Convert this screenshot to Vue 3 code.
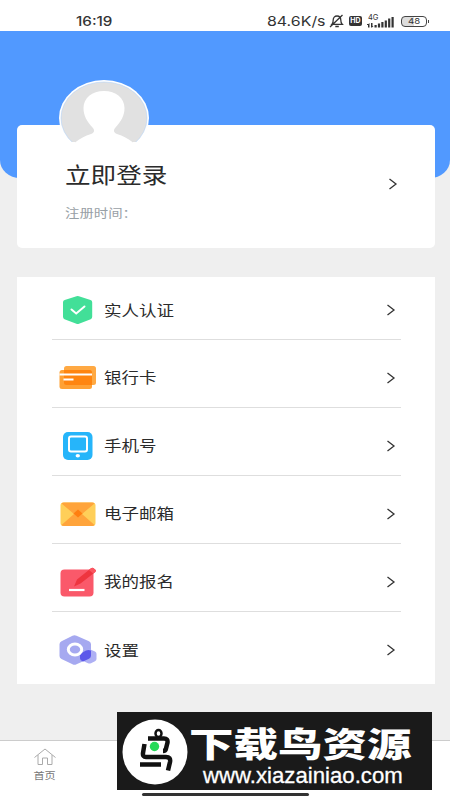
<script setup>
const items = [
  { label: '实人认证', icon: 'shield' },
  { label: '银行卡', icon: 'card' },
  { label: '手机号', icon: 'phone' },
  { label: '电子邮箱', icon: 'mail' },
  { label: '我的报名', icon: 'sign' },
  { label: '设置', icon: 'settings' },
]
const bars = [2.5, 4, 5.5, 7, 9, 10.5]
</script>

<template>
  <div class="screen">
    <header class="status">
      <span class="time">16:19</span>
      <div class="indicators">
        <span class="speed">84.6K/s</span>
        <svg class="bell" width="16" height="14" viewBox="0 0 16 14" fill="none" stroke="#333" stroke-width="1.3">
          <path d="M3 10.3c1-1 1.2-2 1.2-4.2C4.200 3.500 5.700 2 8 2s3.800 1.500 3.800 4.100c0 2.200.3 3.200 1.400 4.200zM6.300 12.500h3.500M1 13L13.500 1" />
        </svg>
        <span class="hd">HD</span>
        <div class="network">
          <span class="gen">4G</span>
          <svg width="28" height="12" viewBox="0 0 28 12" fill="#333">
            <path d="M0 8h1.500l1-1v4.500H1V9H0zM4 7h1.500v3h1l-1.500 1.500H4z" />
            <rect v-for="(h, i) in bars" :key="i" :x="7.500 + i * 3.400" :y="11.500 - h" width="2.2" :height="h" />
          </svg>
        </div>
        <div class="battery"><span>48</span></div>
      </div>
    </header>

    <main class="content">
      <section class="profile">
        <svg class="avatar" width="92" height="78" viewBox="0 0 92 78">
          <ellipse cx="46" cy="39" rx="45" ry="38" fill="#fff" />
          <ellipse cx="46" cy="39" rx="43" ry="36" fill="#e1e1e1" stroke="#a9cdf8" stroke-width=".5" />
          <path d="M46 12c-12 0-20.500 7-20.500 17 0 8 3.500 13.500 9 19.500 2.500 3 2 5-1.500 6.500-6 2-11 4.500-16 8.500V78h58V63.500c-5-4-10-6.500-16-8.500-3.500-1.500-4-3.500-1.500-6.500 5.500-6 9-11.500 9-19.500 0-10-8.500-17-20.500-17z" fill="#fff" />
          <path d="M0 63h17v15H0zM75 63h17v15H75z" fill="#fff" />
        </svg>
        <div class="who">
          <h1>立即登录</h1>
          <p>注册时间：</p>
        </div>
        <svg class="arrow" width="10" height="14" viewBox="0 0 10 14"><path d="M1.500 2L8 7l-6.500 5" /></svg>
      </section>

      <ul class="menu">
        <li v-for="item in items" :key="item.label">
          <svg class="icon" width="40" height="34" viewBox="0 0 40 34">
            <g v-if="item.icon === 'shield'">
              <path d="M18.500 3.300q1.200-.4 2.400 0L32.500 7q1.700.6 1.700 2.300v14.500q0 1.700-1.500 2.500L21 30.700q-1.300.5-2.600 0L6.500 26.300q-1.500-.8-1.500-2.500V9.300Q5 7.600 6.700 7z" fill="#42df98" />
              <path d="M13.500 16.500l4.700 4 8.300-7" fill="none" stroke="#fff" stroke-width="2" stroke-linecap="round" />
            </g>
            <g v-else-if="item.icon === 'card'">
              <rect x="6" y="5" width="32" height="19" rx="2.500" fill="#ffa943" />
              <rect x="1.500" y="9" width="32.500" height="19" rx="2.500" fill="#ffa135" />
              <path d="M6 9h25.500q2.500 0 2.500 2.500V24H8.500Q6 24 6 21.500z" fill="#ff8510" />
              <path d="M1.500 13.500H34M5.500 18.500h10" stroke="#fff" stroke-width="2.200" />
            </g>
            <g v-else-if="item.icon === 'phone'">
              <rect x="5" y="3" width="29.500" height="28" rx="5" fill="#26b5fa" />
              <rect x="11" y="7.500" width="18" height="15" rx="2" fill="none" stroke="#fff" stroke-width="2" />
              <ellipse cx="19.800" cy="26.700" rx="2.200" ry="1.800" fill="#fff" />
            </g>
            <g v-else-if="item.icon === 'mail'">
              <rect x="2.500" y="5.500" width="35" height="23.500" rx="3" fill="#ffcf59" />
              <path d="M3.500 6.500Q4 5.500 6 5.500h28q2 0 2.500 1L24 17l12.500 11q-.5 1-2.500 1H6q-2 0-2.500-1L16 17z" fill="#ffa43b" />
              <path d="M20 12.500l4.500 4-4.500 4-4.500-4z" fill="#ff7f10" />
            </g>
            <g v-else-if="item.icon === 'sign'">
              <rect x="2.500" y="4.500" width="33" height="27" rx="4" fill="#fa596a" />
              <path d="M16 21.500l3-7L33 3.300q1.300-1.200 2.600-.1l1.800 1.500q1.200 1.100-.1 2.200L22.500 18.500z" fill="#ee353f" />
              <path d="M31 5l2-1.700q1.300-1.200 2.600-.1l1.800 1.500q1.200 1.100-.1 2.200L35.200 8.500z" fill="#fa5661" />
              <path d="M11 25h15.500" stroke="#fff" stroke-width="2.200" />
            </g>
            <g v-else>
              <path d="M14.500 2.700q2-1 4 0L31 8.200q2 1 2 3v11.600q0 2-2 3l-12.500 5.500q-2 1-4 0L3.500 26q-2-1-2-3V11.200q0-2 2-3z" fill="#a6a9f0" />
              <path d="M28 17.500l2-.8q1.500-.5 3 0l4 1.700q1.500.8 1.500 2.300V26q0 1.500-1.500 2.200l-4 2q-1.500.7-3 0l-6-2.800q-2-.8-2-2.400 0-4 6-7.500z" fill="#aeb0f4" />
              <path d="M22 22q0-1.200 1.500-2l4.500-2.500q2.500-1.200 5 0v5.300q0 2-2 3L25 28.500q-3-1.200-3-3z" fill="#5c58ea" />
              <ellipse cx="17" cy="16.500" rx="6.700" ry="5.600" fill="none" stroke="#fff" stroke-width="3" />
            </g>
          </svg>
          <span class="label">{{ item.label }}</span>
          <svg class="arrow" width="10" height="14" viewBox="0 0 10 14"><path d="M1.500 2L8 7l-6.500 5" /></svg>
        </li>
      </ul>
    </main>

    <nav class="tabs">
      <div class="tab">
        <svg width="22" height="18" viewBox="0 0 22 18" fill="none" stroke="#aaa" stroke-width="1"><path d="M.5 9.500L11 1l10.500 8.500M4 7v9.500h4.500V10h5v6.500H18V7" /></svg>
        <span>首页</span>
      </div>
    </nav>
    <div class="homebar"></div>

    <aside class="banner">
      <svg class="bird" width="66" height="66" viewBox="0 0 66 66">
        <circle cx="33" cy="33" r="32.500" fill="#fff" />
        <ellipse cx="36.500" cy="14.500" rx="3" ry="3.500" fill="none" stroke="#111" stroke-width="2.500" />
        <path d="M26 19.500h16q4 0 3.500 4l-1.500 6q-.5 2.500-3 2.500M22.500 25l-1.500 9q-.5 4 3 4h20q5 0 4 5l-2 8.500M18 45.500h21" fill="none" stroke="#111" stroke-width="4.500" />
        <circle cx="32.500" cy="27.500" r="4.700" fill="#25d958" />
      </svg>
      <div class="brand">
        <strong>下载鸟资源</strong>
        <span>www.xiazainiao.com</span>
      </div>
    </aside>
  </div>
</template>

<style>
body { margin: 0; }
</style>

<style scoped>
.screen { position: relative; width: 450px; height: 800px; overflow: hidden; display: flex; flex-direction: column; background: #efefef; font-family: "Noto Sans", "Noto Sans CJK SC", sans-serif; color: #2b2b2b; }
.status { height: 31px; box-sizing: border-box; flex: none; background: #fff; display: flex; justify-content: space-between; padding: 11px 20px 0 75.500px; font-family: Inter, sans-serif; }
.time { font-size: 13px; line-height: 20px; font-weight: 500; transform: scaleX(1.17); transform-origin: left; color: #333; }
.indicators { display: flex; align-items: center; height: 20px; width: 163px; }
.speed { width: 62px; font-size: 13.500px; transform: scaleX(1.18); transform-origin: left; color: #333; white-space: nowrap; flex: none; }
.bell { flex: none; margin-right: 4px; }
.hd { flex: none; width: 13px; height: 10px; border-radius: 2px; background: #333; color: #fff; font-size: 7px; line-height: 10px; font-weight: 700; text-align: center; margin-right: 5px; }
.network { position: relative; width: 28px; height: 13px; flex: none; margin-right: 6px; }
.network svg { display: block; margin-top: 1px; }
.gen { position: absolute; left: 1px; top: -1px; font-size: 7.5px; line-height: 8px; color: #333; }
.battery { position: relative; flex: none; width: 26px; height: 11px; box-sizing: border-box; border: 1.3px solid #444; border-radius: 4px; text-align: center; font-size: 8px; line-height: 9px; color: #333; background: linear-gradient(90deg, #ddd 48%, #fff 48%); }
.battery span { display: block; transform: scaleX(1.2); }
.battery::after { content: ""; position: absolute; right: -3px; top: 3px; width: 1.5px; height: 3px; background: #444; }
.content { flex: 1; padding: 94px 15px 0 17px; position: relative; z-index: 0; }
.content::before { content: ""; position: absolute; z-index: -1; inset: 0 0 auto; height: 147px; background: #5199ff; border-radius: 0 0 20px 20px / 0 0 18px 18px; }
.profile { position: relative; height: 123px; box-sizing: border-box; background: #fff; border-radius: 5px; display: flex; justify-content: space-between; padding: 33px 37px 0 48px; }
.avatar { position: absolute; left: 41px; top: -46px; }
.who h1 { margin: 0; font-size: 21.500px; line-height: 34px; font-weight: 400; transform: scaleX(1.19); transform-origin: left; }
.who p { margin: 10px 0 0; font-size: 12px; line-height: 24px; color: #98a0a6; transform: scaleX(1.2); transform-origin: left; }
.arrow { fill: none; stroke: #333; stroke-width: 1.300; }
.profile .arrow { margin-top: 19px; }
.menu { list-style: none; margin: 29px 0 0; padding: 0 34px 0 35px; height: 407px; box-sizing: border-box; background: #fff; }
.menu li { height: 68px; box-sizing: border-box; display: flex; align-items: center; padding: 8px 5px 0 6px; border-bottom: 1px solid #dedede; }
.menu li:first-child { height: 63px; padding-top: 4px; }
.menu li:last-child { border: 0; height: 72px; padding-top: 4px; }
.icon { flex: none; }
.label { margin: -1px 0 0 6px; font-size: 14.700px; line-height: 24px; transform: scaleX(1.19); transform-origin: left; }
.menu .arrow { margin-left: auto; }
.tabs { height: 60px; box-sizing: border-box; flex: none; border-top: 1px solid #ccc; background: #fff; padding: 7px 0 0 34px; }
.tab { width: 22px; display: flex; flex-direction: column; align-items: center; gap: 1px; color: #777; }
.tab span { font-size: 9.500px; line-height: 18px; white-space: nowrap; transform: scaleX(1.17); }
.homebar { position: absolute; left: 142px; top: 793px; width: 167px; height: 3px; border-radius: 2px; background: #333; }
.banner { position: absolute; left: 117px; top: 712px; width: 315px; height: 78px; box-sizing: border-box; background: #1a1a1a; color: #fff; display: flex; gap: 1px; padding: 7px 0 0 5px; }
.bird { flex: none; }
.brand { display: flex; flex-direction: column; align-items: flex-start; padding-top: 8px; }
.brand strong { font-size: 34.500px; line-height: 34px; height: 34px; font-weight: 900; white-space: nowrap; transform: scaleX(1.29); transform-origin: left; }
.brand span { margin: 4px 0 0 14px; font-family: "Liberation Sans", sans-serif; font-size: 22.200px; line-height: 22px; -webkit-text-stroke: .3px #fff; white-space: nowrap; }
</style>
